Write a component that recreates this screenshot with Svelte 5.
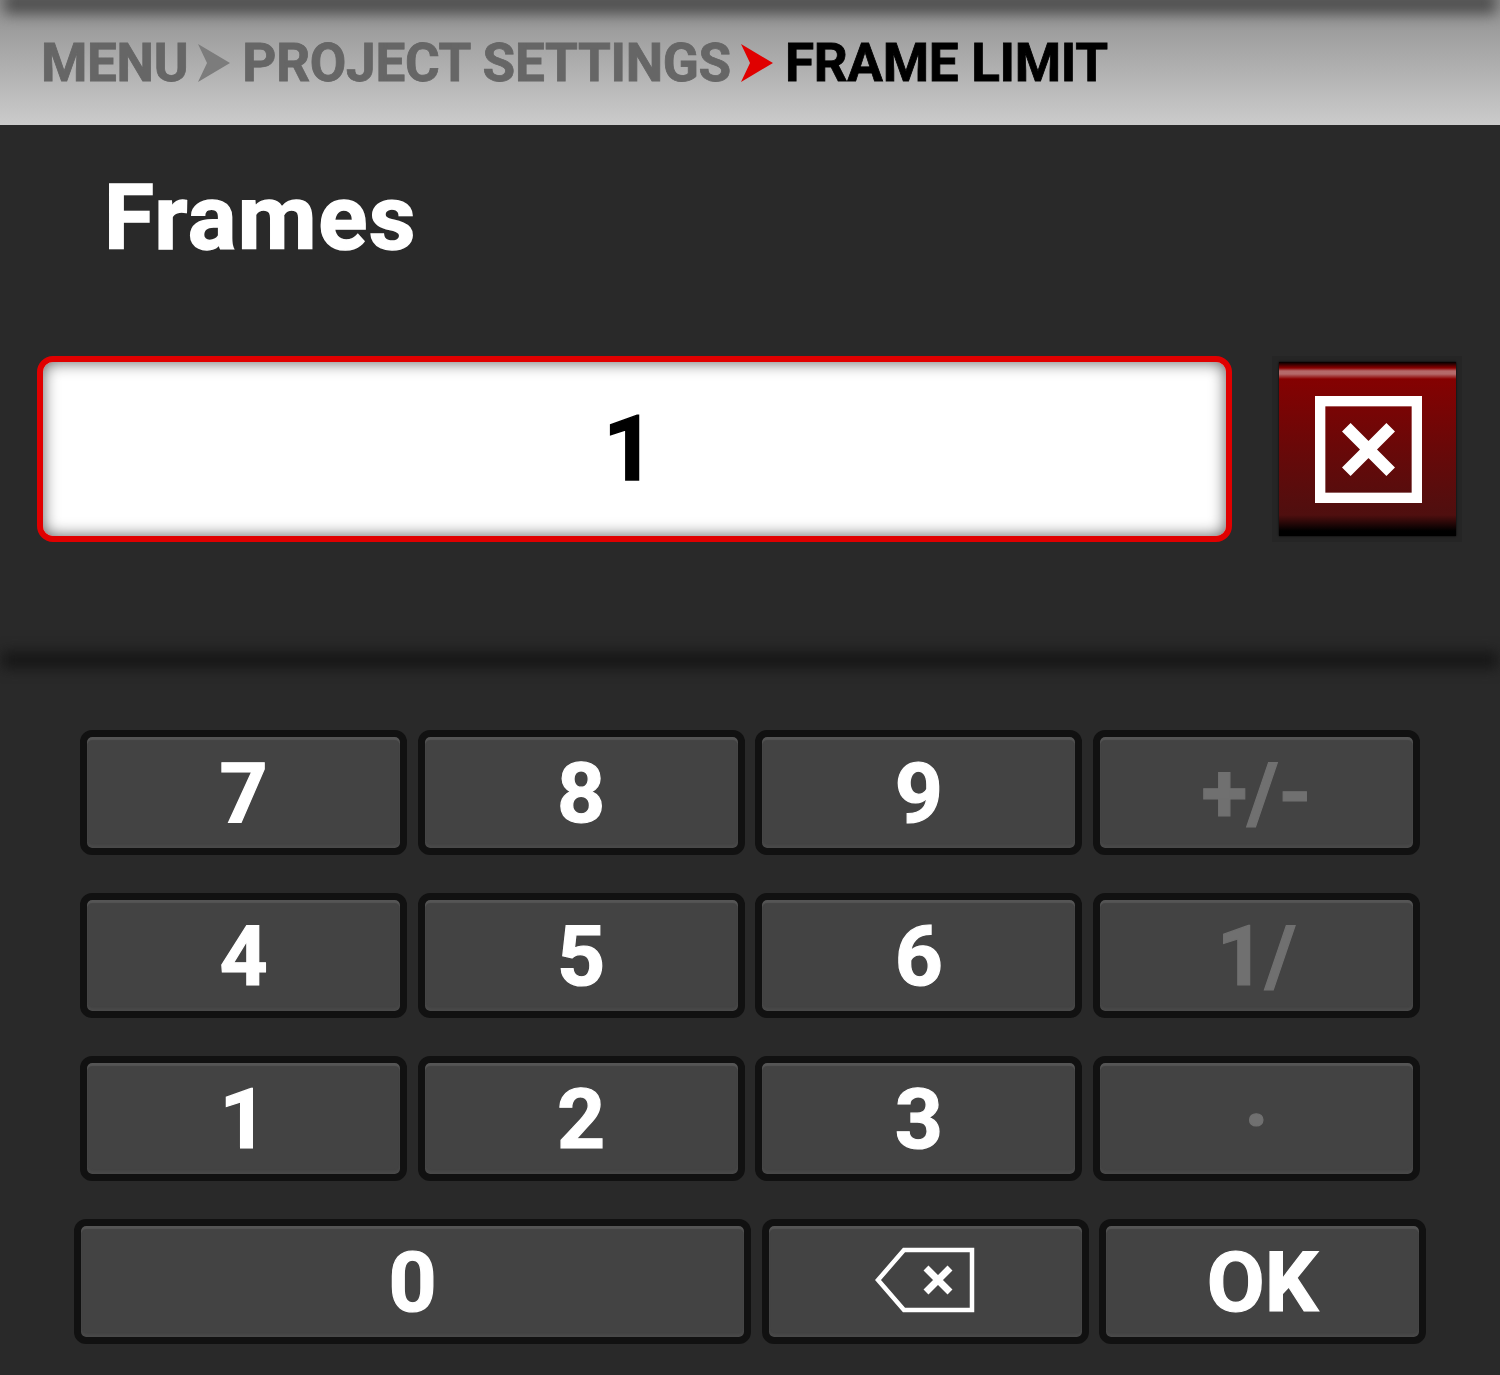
<script>
  const rows = [
    [{ label: '7' }, { label: '8' }, { label: '9' }, { label: '+/-', off: true }],
    [{ label: '4' }, { label: '5' }, { label: '6' }, { label: '1/', off: true }],
    [{ label: '1' }, { label: '2' }, { label: '3' }, { label: '·', off: true }]
  ];
</script>

<div class="screen">
  <header class="crumbs">
    <span class="crumb">MENU</span>
    <svg class="arrow" viewBox="0 0 32 38"><path d="M0 0 L32 19 L0 38 L9 19 Z" fill="#7c7c7c" /></svg>
    <span class="crumb">PROJECT SETTINGS</span>
    <svg class="arrow" viewBox="0 0 32 38"><path d="M0 0 L32 19 L0 38 L9 19 Z" fill="#e00000" /></svg>
    <span class="crumb current">FRAME LIMIT</span>
  </header>

  <h1>Frames</h1>

  <div class="entry">
    <div class="field">1</div>
    <div class="clear-wrap">
      <button class="clear" aria-label="Clear">
        <svg viewBox="0 0 106 106" width="107" height="107">
          <rect x="5" y="5" width="96" height="96" fill="none" stroke="#fff" stroke-width="10.5" />
          <path d="M31 31 L75 75 M75 31 L31 75" stroke="#fff" stroke-width="12" fill="none" />
        </svg>
      </button>
    </div>
  </div>

  <div class="divider"></div>

  <div class="pad">
    {#each rows as row}
      <div class="row">
        {#each row as key}
          <button class="key" class:off={key.off}>{key.label}</button>
        {/each}
      </div>
    {/each}
    <div class="row last">
      <button class="key zero">0</button>
      <button class="key icon" aria-label="Backspace">
        <svg viewBox="0 0 100 66" width="100" height="66">
          <path d="M97 3 H29 L3 33 L29 63 H97 Z" fill="none" stroke="#fff" stroke-width="4.5" />
          <path d="M51 21 L75 45 M75 21 L51 45" stroke="#fff" stroke-width="7" fill="none" />
        </svg>
      </button>
      <button class="key">OK</button>
    </div>
  </div>
</div>

<style>
  :global(body) {
    margin: 0;
    background: #292929;
  }

  .screen {
    width: 1500px;
    height: 1375px;
    overflow: hidden;
    background: #292929;
    font-family: Roboto, "Liberation Sans", sans-serif;
    color: #fff;
  }

  .crumbs {
    position: relative;
    box-sizing: border-box;
    height: 125px;
    padding: 0 0 0 41px;
    display: flex;
    align-items: center;
    background: linear-gradient(#8f8f8f, #cbcbcb);
    overflow: hidden;
  }

  .crumbs::before {
    content: '';
    position: absolute;
    left: 4px;
    right: 4px;
    top: -8px;
    height: 22px;
    background: #4f4f4f;
    filter: blur(7px);
  }

  .crumb {
    font-size: 53px;
    font-weight: 700;
    letter-spacing: -0.3px;
    -webkit-text-stroke: 0.8px;
    color: #666;
    white-space: nowrap;
  }

  .crumb.current {
    color: #000;
  }

  .arrow {
    width: 32px;
    height: 38px;
    flex: none;
    margin: 0 12px 0 10px;
  }

  h1 {
    margin: 0;
    padding: 41px 0 0 104px;
    height: 231px;
    box-sizing: border-box;
    font-size: 91px;
    line-height: 104px;
    font-weight: 700;
    letter-spacing: 1.5px;
    -webkit-text-stroke: 1.5px;
  }

  .entry {
    display: flex;
    padding-left: 37px;
    gap: 40px;
  }

  .field {
    box-sizing: border-box;
    width: 1195px;
    height: 186px;
    border: 6px solid #e00000;
    border-radius: 16px;
    background: #fff;
    box-shadow: inset 0 0 16px rgba(0, 0, 0, 0.65);
    color: #000;
    font-size: 90px;
    font-weight: 700;
    -webkit-text-stroke: 1.5px;
    display: flex;
    align-items: center;
    justify-content: center;
    padding-right: 11px;
  }

  .clear-wrap {
    box-sizing: border-box;
    width: 190px;
    height: 186px;
    padding: 6px 6px 6px 7px;
    background: #252525;
  }

  .clear {
    width: 100%;
    height: 100%;
    padding: 0 0 0 2px;
    border: 0;
    display: flex;
    align-items: center;
    justify-content: center;
    box-shadow: 0 0 2px #000;
    background:
      linear-gradient(#000 0, #8a0000 6px, #b56a6a 9px, #b56a6a 12px, #8b0000 17px, transparent 18px),
      linear-gradient(#8b0000 0, #4f0f0f 88%, #000 97%, #000 100%);
  }

  .divider {
    height: 16px;
    margin: 110px 2px 0;
    background: #151515;
    filter: blur(7px);
  }

  .pad {
    margin-top: 62px;
    display: flex;
    flex-direction: column;
    gap: 38px;
  }

  .row {
    display: flex;
    justify-content: center;
    gap: 10.67px;
  }

  .row.last {
    gap: 10.5px;
  }

  .key {
    box-sizing: border-box;
    width: 327px;
    height: 125px;
    padding: 3px 0 0;
    border: 7px solid #111;
    border-radius: 12px;
    background: #434343;
    background-clip: padding-box;
    box-shadow:
      inset 0 3px 1px #555,
      inset 0 -3px 2px #494949;
    color: #fff;
    font-family: inherit;
    font-size: 84px;
    font-weight: 700;
    -webkit-text-stroke: 1.2px;
    line-height: 1;
    display: flex;
    align-items: center;
    justify-content: center;
  }

  .key.off {
    color: #707070;
  }

  .key.zero {
    width: 677px;
  }

  .key.icon {
    padding: 0 0 3px;
  }
</style>
